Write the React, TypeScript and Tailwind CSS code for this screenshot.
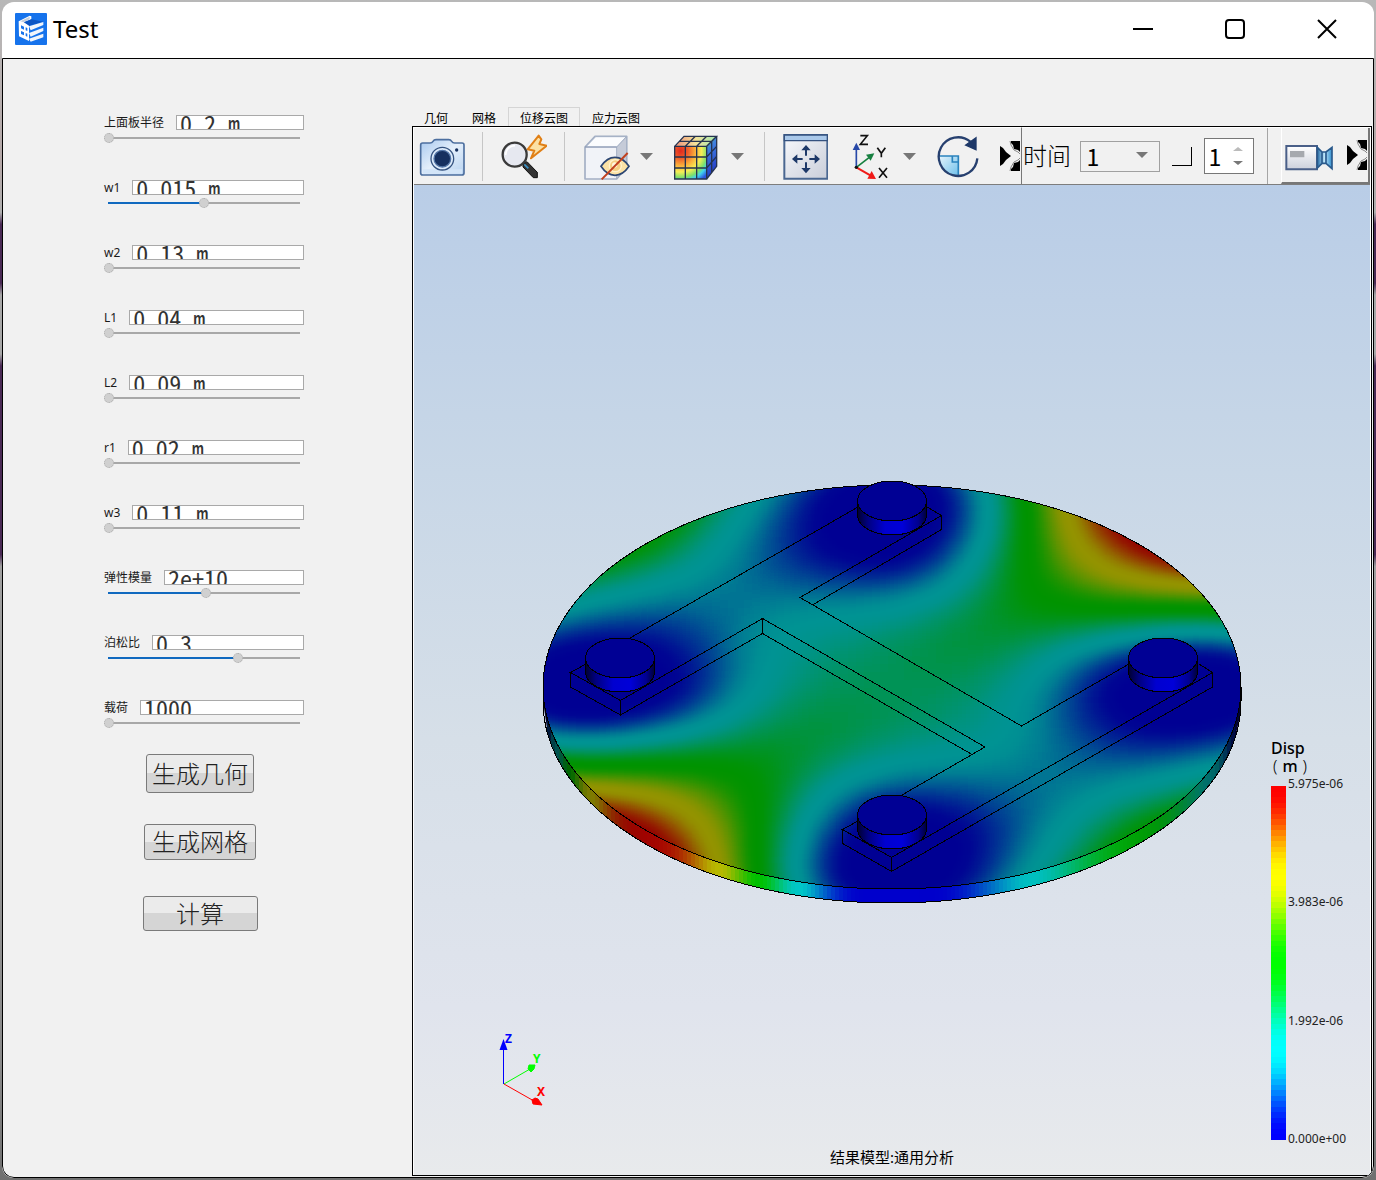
import { useId, useState } from "react";
import type { CSSProperties, ReactNode } from "react";

/* ---------- displacement field ---------- */

const CX = 892;
const CY = 687;
const RX = 349;
const RY = 202;

// Screen x, screen y, normalised displacement.
const SAMPLES: [number, number, number][] = [
  [892, 687, 0.37], [797, 620, 0.24], [740, 590, 0.19], [700, 560, 0.24], [680, 550, 0.32], [650, 545, 0.47],
  [940, 635, 0.39], [1000, 590, 0.45], [1040, 570, 0.52], [1062, 560, 0.62], [1080, 552, 0.74], [1100, 550, 0.8],
  [1120, 550, 0.89], [1150, 545, 1], [892, 657, 0.33], [892, 610, 0.26], [892, 592, 0.2], [892, 578, 0.11],
  [892, 568, 0.05], [892, 556, 0], [892, 530, -0.03], [892, 500, -0.04], [820, 503, 0], [800, 503, 0.07],
  [787, 503, 0.13], [773, 503, 0.19], [753, 513, 0.25], [727, 537, 0.25], [700, 520, 0.33], [673, 533, 0.46],
  [827, 543, 0.02], [800, 563, 0.09], [773, 577, 0.14], [780, 545, 0.12], [850, 560, 0.04], [830, 572, 0.09],
  [720, 610, 0.16], [690, 620, 0.1], [760, 600, 0.18],
  [933, 493, 0], [957, 497, 0.08], [970, 500, 0.15],
  [990, 510, 0.26], [1007, 510, 0.38], [1023, 513, 0.5], [1040, 513, 0.56], [1057, 517, 0.69], [1073, 523, 0.76],
  [1090, 527, 0.85], [1107, 533, 0.94], [957, 537, 0.12], [980, 543, 0.25], [1000, 550, 0.38], [1023, 553, 0.49],
  [923, 560, 0.04], [933, 573, 0.12], [940, 590, 0.22], [963, 613, 0.34], [1210, 767, 0.25], [1223, 743, 0.13],
  [1183, 800, 0.38], [1135, 832, 0.48], [1123, 760, 0.14], [1123, 777, 0.23], [1090, 810, 0.28], [1107, 823, 0.38],
  [1057, 767, 0.18],
];

type Point = [number, number];

// The plate is symmetric about both diagonals, so work in diagonal coordinates.
const toDiagonal = (x: number, y: number): Point => {
  const u = (x - CX) / RX;
  const v = (y - CY) / RY;
  return [(u - v) * Math.SQRT1_2, (u + v) * Math.SQRT1_2];
};

const basis = (r2: number) => Math.pow(r2 + 0.02, 1.25);

const kernel = (a: Point, b: Point) => {
  let sum = 0;
  for (const s of [1, -1]) {
    for (const t of [1, -1]) {
      const dp = a[0] - s * b[0];
      const dq = a[1] - t * b[1];
      sum += basis(dp * dp + dq * dq);
    }
  }
  return sum;
};

const CENTRES = SAMPLES.map(([x, y]) => toDiagonal(x, y));

const solve = (matrix: number[][], rhs: number[]) => {
  const n = rhs.length;
  const a = matrix.map((row, i) => [...row, rhs[i]]);
  for (let c = 0; c < n; c++) {
    let pivot = c;
    for (let r = c + 1; r < n; r++) if (Math.abs(a[r][c]) > Math.abs(a[pivot][c])) pivot = r;
    [a[c], a[pivot]] = [a[pivot], a[c]];
    for (let r = c + 1; r < n; r++) {
      const f = a[r][c] / a[c][c];
      for (let k = c; k <= n; k++) a[r][k] -= f * a[c][k];
    }
  }
  const out = new Array<number>(n).fill(0);
  for (let r = n - 1; r >= 0; r--) {
    let s = a[r][n];
    for (let k = r + 1; k < n; k++) s -= a[r][k] * out[k];
    out[r] = s / a[r][r];
  }
  return out;
};

// Least squares with a small penalty keeps the surface smooth.
const fitWeights = () => {
  const k = CENTRES.map((a) => CENTRES.map((b) => kernel(a, b)));
  const normal = k.map((_, i) =>
    k.map((__, j) => k.reduce((s, row) => s + row[i] * row[j], i === j ? 0.0001 : 0)),
  );
  const rhs = k.map((_, i) => SAMPLES.reduce((s, sample, m) => s + k[m][i] * sample[2], 0));
  return solve(normal, rhs);
};

const WEIGHTS = fitWeights();

const field = (x: number, y: number) => {
  const p = toDiagonal(x, y);
  const value = CENTRES.reduce((s, c, i) => s + WEIGHTS[i] * kernel(p, c), 0);
  return Math.min(1, Math.max(0, value));
};

/* ---------- colour map ---------- */

const STOPS = [
  [0, 0, 1],
  [0, 1, 1],
  [0, 1, 0],
  [1, 1, 0],
  [1, 0, 0],
];

const mapColour = (t: number) => {
  const scaled = Math.min(0.9999, Math.max(0, t)) * 4;
  const i = Math.floor(scaled);
  const f = scaled - i;
  const s = f * f * (3 - 2 * f);
  return STOPS[i].map((c, k) => c + (STOPS[i + 1][k] - c) * s);
};

const rgb = (t: number, brightness: number) =>
  `rgb(${mapColour(t)
    .map((c) => Math.round(c * brightness * 255))
    .join(",")})`;

const table = (channel: number) =>
  Array.from({ length: 33 }, (_, i) => (mapColour(i / 32)[channel] * 0.58).toFixed(3)).join(" ");

const LEGEND_BANDS = 64;
const LEGEND = `linear-gradient(to top, ${Array.from({ length: LEGEND_BANDS }, (_, i) => {
  const from = ((i / LEGEND_BANDS) * 100).toFixed(2);
  const to = (((i + 1) / LEGEND_BANDS) * 100).toFixed(2);
  return `${rgb(i / (LEGEND_BANDS - 1), 1)} ${from}% ${to}%`;
}).join(", ")})`;

const CELL = 8;
const CELLS: { x: number; y: number; g: number }[] = [];
for (let y = 464; y < 912; y += CELL) {
  for (let x = 520; x < 1264; x += CELL) {
    const u = (x + 4 - CX) / 376;
    const v = (y + 4 - CY) / 228;
    if (u * u + v * v < 1) CELLS.push({ x, y, g: Math.round(field(x + 4, y + 4) * 255) });
  }
}

const RIM: { points: string; fill: string }[] = [];
for (let x = 543; x < 1241; x += 4) {
  const edge = (px: number) => CY + RY * Math.sqrt(Math.max(0, 1 - ((px - CX) / RX) ** 2));
  const x2 = Math.min(1241, x + 5);
  const s = (x + 2 - CX) / RX;
  const brightness = 0.8 * Math.pow(Math.max(0.02, 1 - s * s), 0.36);
  RIM.push({
    points: `${x},${edge(x) - 1} ${x2},${edge(x2) - 1} ${x2},${edge(x2) + 14} ${x},${edge(x) + 14}`,
    fill: rgb(field(x + 2, edge(x + 2)), brightness),
  });
}

const BOLTS: Point[] = [
  [892, 501],
  [620, 658],
  [1163, 658],
  [892, 815],
];

const EDGES = [
  "M586 664L570.5 672.5L620.5 700.5L762.5 618.5L985 747L902 795",
  "M570.5 672.5V687L620.5 715L762.5 633.5L972 754.5",
  "M620.5 700.5V715M762.5 618.5V633.5",
  "M630 638L858 507",
  "M927 507L941.5 515.5L800 597.5L1021.5 726L1129 664",
  "M941.5 515.5V529.5L812.5 605",
  "M1199 664L1212.5 672.5L891.5 857.5L842.5 829.5L858 821",
  "M1212.5 672.5V687L891.5 871.5L842.5 843.5V829.5M891.5 857.5V871.5",
];

function Model() {
  return (
    <svg className="block h-full w-full" viewBox="414 185 956 990" role="img" aria-label="Displacement contour">
      <defs>
        <clipPath id="plate">
          <ellipse cx={CX} cy={CY} rx={RX} ry={RY} />
        </clipPath>
        <filter id="contour" x="0" y="0" width="1" height="1" colorInterpolationFilters="sRGB">
          <feGaussianBlur stdDeviation="5" />
          <feComponentTransfer>
            <feFuncR type="table" tableValues={table(0)} />
            <feFuncG type="table" tableValues={table(1)} />
            <feFuncB type="table" tableValues={table(2)} />
          </feComponentTransfer>
        </filter>
        <linearGradient id="boltSide">
          <stop offset="0" stopColor="#000030" />
          <stop offset="0.15" stopColor="#000080" />
          <stop offset="0.4" stopColor="#0000d0" />
          <stop offset="0.65" stopColor="#0000d8" />
          <stop offset="0.88" stopColor="#000090" />
          <stop offset="1" stopColor="#000038" />
        </linearGradient>
      </defs>
      {RIM.map((r) => (
        <polygon key={r.points} points={r.points} fill={r.fill} />
      ))}
      <g clipPath="url(#plate)">
        <g filter="url(#contour)" shapeRendering="crispEdges">
          {CELLS.map((c) => (
            <rect key={`${c.x}-${c.y}`} x={c.x} y={c.y} width={CELL} height={CELL} fill={`rgb(${c.g},${c.g},${c.g})`} />
          ))}
        </g>
      </g>
      <g fill="none" stroke="#000" shapeRendering="crispEdges">
        <ellipse cx={CX} cy={CY} rx={RX} ry={RY} />
        <path d="M543 687V701A349 202 0 0 0 1241 701V687" />
        {EDGES.map((d) => (
          <path key={d} d={d} />
        ))}
      </g>
      {BOLTS.map(([x, y]) => (
        <g key={`${x}-${y}`} stroke="#000" shapeRendering="crispEdges">
          <path d={`M${x - 34.5} ${y}v14a34.5 20 0 0 0 69 0v-14z`} fill="url(#boltSide)" />
          <ellipse cx={x} cy={y} rx="34.5" ry="20" fill="#000094" />
        </g>
      ))}
      <g className="font-['Noto_Sans'] text-xs font-bold">
        <path d="M503.5 1084V1048" stroke="#00f" />
        <path d="M503.5 1039l-4 11h8z" fill="#00f" />
        <path d="M504 1084L530 1069" stroke="#0f0" />
        <path d="M529 1065h6l-1 4-3 3-3-3z" fill="#0f0" stroke="#0f0" />
        <path d="M504 1084L534 1101" stroke="#f00" />
        <path d="M535 1098l3 1 4 6-9-1-1-4z" fill="#f00" stroke="#f00" />
        <text x="505" y="1043" fill="#00f">Z</text>
        <text x="533" y="1063" fill="#0f0">Y</text>
        <text x="537" y="1096" fill="#f00">X</text>
      </g>
    </svg>
  );
}

/* ---------- icons ---------- */

const CameraIcon = () => (
  <svg className="h-[47px] w-[46px]" viewBox="27 96 138 141">
    <defs>
      <linearGradient id="cam" x1="0" y1="0" x2="1" y2="1">
        <stop offset="0" stopColor="#a9c9ee" />
        <stop offset="0.5" stopColor="#e4effb" />
        <stop offset="1" stopColor="#b7d2f0" />
      </linearGradient>
    </defs>
    <path d="M38 126h22q6 0 9-5t9-5h38q6 0 9 5t9 5h22q6 0 6 6v84q0 6-6 6H38q-6 0-6-6v-84q0-6 6-6z" fill="url(#cam)" stroke="#4d6f9f" strokeWidth="5" />
    <path d="M38 205h118v13H38z" fill="#d3e5f8" />
    <circle cx="97" cy="173" r="34" fill="#dceafa" stroke="#34527f" strokeWidth="4" />
    <circle cx="97" cy="173" r="25" fill="#16305f" stroke="#5375a6" strokeWidth="4" />
    <circle cx="140" cy="147" r="5" fill="#16305f" />
  </svg>
);

const SearchFlashIcon = () => (
  <svg className="h-[47px] w-[46px]" viewBox="274 96 138 141">
    <path d="M340 190l12-8 31 32v16h-12l-31-32z" fill="#333" stroke="#111" strokeWidth="3" />
    <path d="M344 190l12 12" stroke="#3b93c7" strokeWidth="5" />
    <circle cx="315" cy="161" r="36" fill="#e6e8f0" stroke="#3a3a3a" strokeWidth="7" />
    <path d="M288 162q2-26 28-28" fill="none" stroke="#fff" strokeWidth="5" />
    <path d="M387 104l-33 41 20 4-10 23 47-38-22-5 6-14z" fill="#fbe0a4" stroke="#e07f16" strokeWidth="6" strokeLinejoin="round" />
  </svg>
);

const HideIcon = () => (
  <svg className="h-[47px] w-[47px]" viewBox="519 96 141 141">
    <path d="M525 138l30-32h95v92l-30 36h-95z" fill="#f1f3f8" stroke="#a3afc4" strokeWidth="5" strokeLinejoin="round" />
    <path d="M620 138l30-32v92l-30 36z" fill="#c5cbd8" stroke="#a3afc4" strokeWidth="3" />
    <path d="M527 138l30-31h92l-29 31z" fill="#fbfcfe" stroke="#a3afc4" strokeWidth="3" />
    <path d="M525 138h95" stroke="#8594b0" strokeWidth="3" />
    <path d="M573 196q18-27 42-27t42 27q-18 27-42 27t-42-27z" fill="#fbe2a6" stroke="#2c4673" strokeWidth="5" />
    <circle cx="616" cy="194" r="18" fill="#f6cf83" stroke="#fff3cf" strokeWidth="4" />
    <circle cx="614" cy="192" r="8" fill="#fff6dd" />
    <path d="M653 156l-78 79" stroke="#c0401f" strokeWidth="6" />
  </svg>
);

const CubeIcon = () => (
  <svg className="h-[47px] w-[45px]" viewBox="789 96 135 141">
    <defs>
      <radialGradient id="cubeFront" gradientUnits="userSpaceOnUse" cx="812" cy="150" r="105">
        <stop offset="0" stopColor="#e0281f" />
        <stop offset="0.2" stopColor="#ef5a2a" />
        <stop offset="0.42" stopColor="#fbb03b" />
        <stop offset="0.6" stopColor="#f6ee55" />
        <stop offset="0.76" stopColor="#7fe06a" />
        <stop offset="0.86" stopColor="#3fd3ee" />
        <stop offset="1" stopColor="#2d55e0" />
      </radialGradient>
      <linearGradient id="cubeTop">
        <stop offset="0" stopColor="#f0917a" />
        <stop offset="0.5" stopColor="#f3e29a" />
        <stop offset="1" stopColor="#9fe8b0" />
      </linearGradient>
      <linearGradient id="cubeSide" x1="0" y1="0" x2="0.3" y2="1">
        <stop offset="0" stopColor="#57c98e" />
        <stop offset="0.35" stopColor="#3f7fe0" />
        <stop offset="1" stopColor="#2336c4" />
      </linearGradient>
    </defs>
    <path d="M794 136h96v98h-96z" fill="url(#cubeFront)" />
    <path d="M794 136l28-30h98l-30 30z" fill="url(#cubeTop)" />
    <path d="M890 136l30-30v90l-30 38z" fill="url(#cubeSide)" />
    <path
      d="M794 136h96v98h-96zM826 136v98M860 136v98M794 168h96M794 201h96M794 136l28-30h98l-30 30M826 136l30-30M860 136l30-30M808 121h96M920 106v90l-30 38M905 121v94M890 168l30-32M890 201l30-35"
      fill="none"
      stroke="#26334f"
      strokeWidth="4"
    />
  </svg>
);

const FitIcon = () => (
  <svg className="h-[47px] w-[45px]" viewBox="159 96 135 141">
    <defs>
      <linearGradient id="fit" x1="0" y1="0" x2="1" y2="1">
        <stop offset="0" stopColor="#f8f9fc" />
        <stop offset="1" stopColor="#c9ced9" />
      </linearGradient>
    </defs>
    <path d="M163 102h129v131H163z" fill="url(#fit)" stroke="#4a6791" strokeWidth="6" />
    <path d="M163 102h129v17H163z" fill="#a9c8ea" stroke="#35527f" strokeWidth="4" />
    <path d="M228 164v-18M228 184v18M218 174h-18M238 174h18" stroke="#1d3868" strokeWidth="6" />
    <path d="M228 132l14 16h-28zM228 217l14-16h-28zM186 174l16-14v28zM270 174l-16-14v28z" fill="#1d3868" />
  </svg>
);

const AxesIcon = () => (
  <svg className="h-[47px] w-[37px]" viewBox="366 96 111 141">
    <path d="M379 199v-56" stroke="#2748a8" strokeWidth="5" />
    <path d="M379 125l11 22h-22z" fill="#2748a8" />
    <path d="M379 199l38-29" stroke="#178040" strokeWidth="5" />
    <path d="M433 157l-11 22-14-18z" fill="#178040" />
    <path d="M379 199l42 24" stroke="#f01a18" strokeWidth="6" />
    <path d="M438 234l-26-1 13-23z" fill="#f01a18" />
    <circle cx="379" cy="199" r="5" fill="#111" />
    <g fill="none" stroke="#111" strokeWidth="5">
      <path d="M391 104h21l-21 26h23M442 140l12 17 12-17M454 157v12M447 201l24 29M471 201l-24 29" />
    </g>
  </svg>
);

const RotateIcon = () => (
  <svg className="h-[47px] w-[42px]" viewBox="621 96 126 141">
    <defs>
      <linearGradient id="rot" x1="0" y1="0" x2="1" y2="1">
        <stop offset="0" stopColor="#e3f3fc" />
        <stop offset="1" stopColor="#6fc0ea" />
      </linearGradient>
    </defs>
    <path d="M628 165h57v59a58 58 0 0 1-57-59z" fill="url(#rot)" />
    <path d="M626 165h59v60M667 165v18h18" fill="none" stroke="#2a83bd" strokeWidth="5" />
    <path d="M721 122A58 58 0 1 0 742 172" fill="none" stroke="#27406f" strokeWidth="7" />
    <path d="M738 110v36l-31-14z" fill="#1d3868" stroke="#1d3868" strokeWidth="4" />
  </svg>
);

const RecorderIcon = () => (
  <svg className="h-[47px] w-[48px]" viewBox="825 96 144 141">
    <defs>
      <linearGradient id="rec" x1="0" y1="0" x2="0" y2="1">
        <stop offset="0" stopColor="#fff" />
        <stop offset="1" stopColor="#ccd0db" />
      </linearGradient>
      <linearGradient id="lens" x1="0" x2="1">
        <stop offset="0" stopColor="#2a6fa8" />
        <stop offset="0.5" stopColor="#bfe6fa" />
        <stop offset="1" stopColor="#2f8ccc" />
      </linearGradient>
    </defs>
    <path d="M829 138h92v70h-92z" fill="url(#rec)" stroke="#4a5f88" strokeWidth="6" />
    <path d="M840 153h43v19h-43z" fill="#a6a9ae" />
    <path d="M922 142l14 14v34l-14 14zM936 156h12v34h-12zM948 156l18-14v64l-18-16z" fill="url(#lens)" stroke="#2a5a8c" strokeWidth="5" />
  </svg>
);

const MoreIcon = () => (
  <svg className="h-[30px] w-5" viewBox="0 0 20 30">
    <path d="M0 0h20v30H0z" fill="#f1f1f1" />
    <path d="M0 5l3 2 3 4 5 4-5 4-3 4-3 2z" fill="#000" />
    <path d="M11 0h9v11l-2-2-4-1-1-4-2-2z" fill="#000" />
    <path d="M20 19v11h-9v-2l2-2 1-4 4-1z" fill="#000" />
    <path d="M10 0l1 4 3 5 4 2 2 2M10 30l1-4 3-5 4-2 2-2" fill="none" stroke="#888" />
  </svg>
);

const LogoIcon = () => (
  <svg className="h-8 w-8" viewBox="0 0 96 96" aria-hidden="true">
    <rect width="96" height="96" rx="3" fill="#1673ec" />
    <path d="M11 25L44 8l5 2v9l-22 9 15 8v48L12 70z" fill="#fff" />
    <path d="M16 25l28-14v8l-18 9z" fill="#c4cfdd" />
    <path d="M27 28l22-9 36 7-43 12z" fill="#0d56c4" />
    <path d="M18 37l9 4v9l-9-4zM18 54l9 4v9l-9-4zM32 43l5 2v9l-5-2zM32 60l5 2v9l-5-2z" fill="#1673ec" />
    <path d="M42 40l43-13v9L47 52zM42 60l43-16v10L47 71zM42 77l43-15v11L47 86z" fill="#f1f5fb" />
  </svg>
);

/* ---------- small parts ---------- */

const Caret = ({ label }: { label: string }) => (
  <button type="button" aria-label={label} className="flex h-10 w-[13px] shrink-0 items-center">
    <svg className="h-[7px] w-[13px]" viewBox="0 0 13 7">
      <path d="M0 0h13L6.5 7z" fill="#777" />
    </svg>
  </button>
);

const Tool = ({ label, children }: { label: string; children: ReactNode }) => (
  <button type="button" aria-label={label} className="shrink-0">
    {children}
  </button>
);

const Divider = () => <span className="h-[49px] w-px shrink-0 bg-[#c6c6c6]" />;

type Param = { label: string; value: string; position: number };

const PARAMS: Param[] = [
  { label: "上面板半径", value: "0.2 m", position: 0 },
  { label: "w1", value: "0.015 m", position: 50 },
  { label: "w2", value: "0.13 m", position: 0 },
  { label: "L1", value: "0.04 m", position: 0 },
  { label: "L2", value: "0.09 m", position: 0 },
  { label: "r1", value: "0.02 m", position: 0 },
  { label: "w3", value: "0.11 m", position: 0 },
  { label: "弹性模量", value: "2e+10", position: 51 },
  { label: "泊松比", value: "0.3", position: 68 },
  { label: "载荷", value: "1000", position: 0 },
];

function ParamRow({ label, value, position }: Param) {
  const id = useId();
  const [pos, setPos] = useState(position);
  return (
    <div className="h-7">
      <div className="flex h-[15px] items-center gap-3">
        <label htmlFor={id} className="shrink-0 text-xs leading-[15px] text-[#1a1a1a]">
          {label}
        </label>
        <input
          id={id}
          type="text"
          defaultValue={value}
          className="h-[15px] w-0 min-w-0 flex-1 border border-[#a9a9a9] bg-white pl-[3px] font-['Noto_Sans_Mono_CJK_SC','Liberation_Mono',monospace] text-2xl leading-6 text-[#333] outline-none"
        />
      </div>
      <input
        type="range"
        min={0}
        max={100}
        value={pos}
        onChange={(e) => setPos(Number(e.target.value))}
        aria-label={label}
        style={{ "--fill": `${pos}%` } as CSSProperties}
        className="mt-[3px] block h-[10px] w-full appearance-none bg-[linear-gradient(to_right,#1069bf_var(--fill),#a8a8a8_var(--fill))] bg-[length:calc(100%-8px)_2px] bg-center bg-no-repeat [&::-webkit-slider-thumb]:h-[10px] [&::-webkit-slider-thumb]:w-[10px] [&::-webkit-slider-thumb]:appearance-none [&::-webkit-slider-thumb]:rounded-full [&::-webkit-slider-thumb]:border [&::-webkit-slider-thumb]:border-dotted [&::-webkit-slider-thumb]:border-[#aaa] [&::-webkit-slider-thumb]:bg-[#d0d0d0]"
      />
    </div>
  );
}

const BUTTON =
  "rounded-[3px] border border-[#7a7a7a] bg-[linear-gradient(#ebebeb_50%,#d5d5d5_50%)] text-center text-2xl leading-8 font-light text-[#222]";

const TABS = ["几何", "网格", "位移云图", "应力云图"];

function Toolbar() {
  return (
    <div className="flex h-[58px] shrink-0 border-b border-[#7d7d7d] bg-[#f1f1f1]">
      <div className="flex shrink-0 items-center border-t border-white pr-px pl-[5px]">
        <Tool label="Snapshot"><CameraIcon /></Tool>
        <div className="w-[17px]" />
        <Divider />
        <div className="w-[18px]" />
        <Tool label="Quick zoom"><SearchFlashIcon /></Tool>
        <div className="w-[17px]" />
        <Divider />
        <div className="w-[18px]" />
        <Tool label="Hide"><HideIcon /></Tool>
        <div className="w-[10px]" />
        <Caret label="Hide options" />
        <div className="w-5" />
        <Tool label="Contour"><CubeIcon /></Tool>
        <div className="w-[13px]" />
        <Caret label="Contour options" />
        <div className="w-5" />
        <Divider />
        <div className="w-[18px]" />
        <Tool label="Fit view"><FitIcon /></Tool>
        <div className="w-6" />
        <Tool label="Orientation"><AxesIcon /></Tool>
        <div className="w-[14px]" />
        <Caret label="Orientation options" />
        <div className="w-[21px]" />
        <Tool label="Rotate"><RotateIcon /></Tool>
        <div className="w-[21px]" />
        <Tool label="More"><MoreIcon /></Tool>
      </div>
      <div className="flex min-w-0 flex-1 items-center border-t border-l border-t-white border-l-[#777] pl-px">
        <label htmlFor="time" className="shrink-0 text-2xl font-light">时间</label>
        <div className="relative ml-[9px] h-[31px] w-20 shrink-0">
          <select id="time" className="h-full w-full appearance-none border border-[#a0a0a0] bg-[#f1f1f1] pl-[6px] font-['Noto_Sans_Mono_CJK_SC','Liberation_Mono',monospace] text-2xl leading-7 outline-none">
            <option>1</option>
          </select>
          <svg className="pointer-events-none absolute top-[11px] right-3 h-[6px] w-3" viewBox="0 0 12 6">
            <path d="M0 0h12L6 6z" fill="#777" />
          </svg>
        </div>
        <input type="checkbox" aria-label="Time option" className="ml-3 h-[19px] w-5 shrink-0 appearance-none border-r border-b border-black bg-[#f1f1f1]" />
        <div className="ml-3 flex h-[36px] w-[50px] shrink-0 items-center border border-[#777] bg-white">
          <input aria-label="Step" defaultValue="1" className="h-8 w-7 pl-1 font-['Noto_Sans_Mono_CJK_SC','Liberation_Mono',monospace] text-2xl leading-8 outline-none" />
          <div className="flex flex-col gap-[10px]">
            <button type="button" aria-label="Increase">
              <svg className="block h-1 w-[10px]" viewBox="0 0 10 4"><path d="M5 0l5 4H0z" fill="#bbb" /></svg>
            </button>
            <button type="button" aria-label="Decrease">
              <svg className="block h-1 w-[10px]" viewBox="0 0 10 4"><path d="M0 0h10L5 4z" fill="#777" /></svg>
            </button>
          </div>
        </div>
        <div className="ml-[13px] h-full w-px shrink-0 bg-[#a5a5a5]" />
        <div className="ml-[13px] flex h-[56px] shrink-0 items-center gap-[14px] border-r-2 border-b-2 border-l border-r-[#777] border-b-[#777] border-l-white pr-px pl-[3px]">
          <Tool label="Record"><RecorderIcon /></Tool>
          <Tool label="More recording tools"><MoreIcon /></Tool>
        </div>
      </div>
    </div>
  );
}

export default function App() {
  const [tab, setTab] = useState(2);
  return (
    <div className="flex min-h-screen flex-col bg-[linear-gradient(#b8b8b8,#b5a8a8_14%,#b0b0b0_18%,#4a2a55_19%,#4a2a55_24%,#a8a8a8_25%,#a8a8a8_30%,#4a2a55_31%,#4a2a55_47%,#a0a0a0_48%,#8a8a8a_90%,#707070)] p-[2px] font-['Noto_Sans','Noto_Sans_CJK_SC',sans-serif] text-black">
      <div className="flex flex-1 flex-col overflow-hidden rounded-xl bg-white">
        <header className="flex h-14 shrink-0 items-center pr-[37px] pb-[2px] pl-[13px]">
          <LogoIcon />
          <h1 className="ml-[6px] flex-1 text-2xl">Test</h1>
          <div className="flex items-center gap-[72px]">
            <button type="button" aria-label="Minimise" className="flex h-5 w-5 items-center">
              <span className="h-[2px] w-5 bg-black" />
            </button>
            <button type="button" aria-label="Maximise" className="h-5 w-5 rounded-[4px] border-2 border-black" />
            <button type="button" aria-label="Close" className="h-5 w-5">
              <svg className="block h-5 w-5" viewBox="0 0 20 20">
                <path d="M1 1l18 18M19 1L1 19" stroke="#000" strokeWidth="2" />
              </svg>
            </button>
          </div>
        </header>
        <div className="flex flex-1 overflow-hidden rounded-b-xl border border-black bg-[#f1f1f1]">
          <aside className="w-[409px] shrink-0 pt-14 pl-[101px]">
            <form className="w-[200px]" onSubmit={(e) => e.preventDefault()}>
              <div className="flex flex-col gap-[37px]">
                {PARAMS.map((p) => (
                  <ParamRow key={p.label} {...p} />
                ))}
              </div>
              <div className="mt-[26px] flex flex-col items-center pr-2">
                <button type="button" className={`${BUTTON} h-[39px] w-[108px]`}>生成几何</button>
                <button type="button" className={`${BUTTON} mt-[31px] h-9 w-28`}>生成网格</button>
                <button type="button" className={`${BUTTON} mt-9 h-[35px] w-[115px]`}>计算</button>
              </div>
            </form>
          </aside>
          <main className="flex min-w-0 flex-1 flex-col pt-12">
            <div role="tablist" className="flex h-[19px] shrink-0">
              {TABS.map((name, i) => (
                <button
                  key={name}
                  type="button"
                  role="tab"
                  aria-selected={i === tab}
                  onClick={() => setTab(i)}
                  className={`border border-b-0 px-[11px] pt-1 text-xs leading-[14px] ${i === tab ? "border-[#d5d5d5]" : "border-transparent"}`}
                >
                  {name}
                </button>
              ))}
            </div>
            <section className="mr-px mb-px flex flex-1 flex-col border border-black bg-white px-px">
              <Toolbar />
              <div className="relative flex-1 bg-[linear-gradient(#b9cde7,#c8d7e7_29%,#d6dfe8_56%,#e0e4ed_83%,#e8eaec)]">
                <div className="absolute inset-0">
                  <Model />
                </div>
                <div className="absolute right-[21px] bottom-[35px] w-[78px]">
                  <div className="text-base leading-[18px] font-medium">Disp</div>
                  <div className="flex gap-[5px] pl-[2px] text-base leading-[18px] font-medium">
                    <span className="font-light">(</span>
                    <span>m</span>
                    <span className="font-light">)</span>
                  </div>
                  <div className="mt-[11px] flex h-[354px] gap-[2px]">
                    <div className="w-[15px] shrink-0" style={{ background: LEGEND }} />
                    <div className="-mt-[10px] -mb-[7px] flex flex-col justify-between text-xs text-[#222]">
                      <span>5.975e-06</span>
                      <span>3.983e-06</span>
                      <span>1.992e-06</span>
                      <span>0.000e+00</span>
                    </div>
                  </div>
                </div>
                <p className="absolute inset-x-0 bottom-2 text-center text-[15px] leading-5">结果模型:通用分析</p>
              </div>
            </section>
          </main>
        </div>
      </div>
    </div>
  );
}
